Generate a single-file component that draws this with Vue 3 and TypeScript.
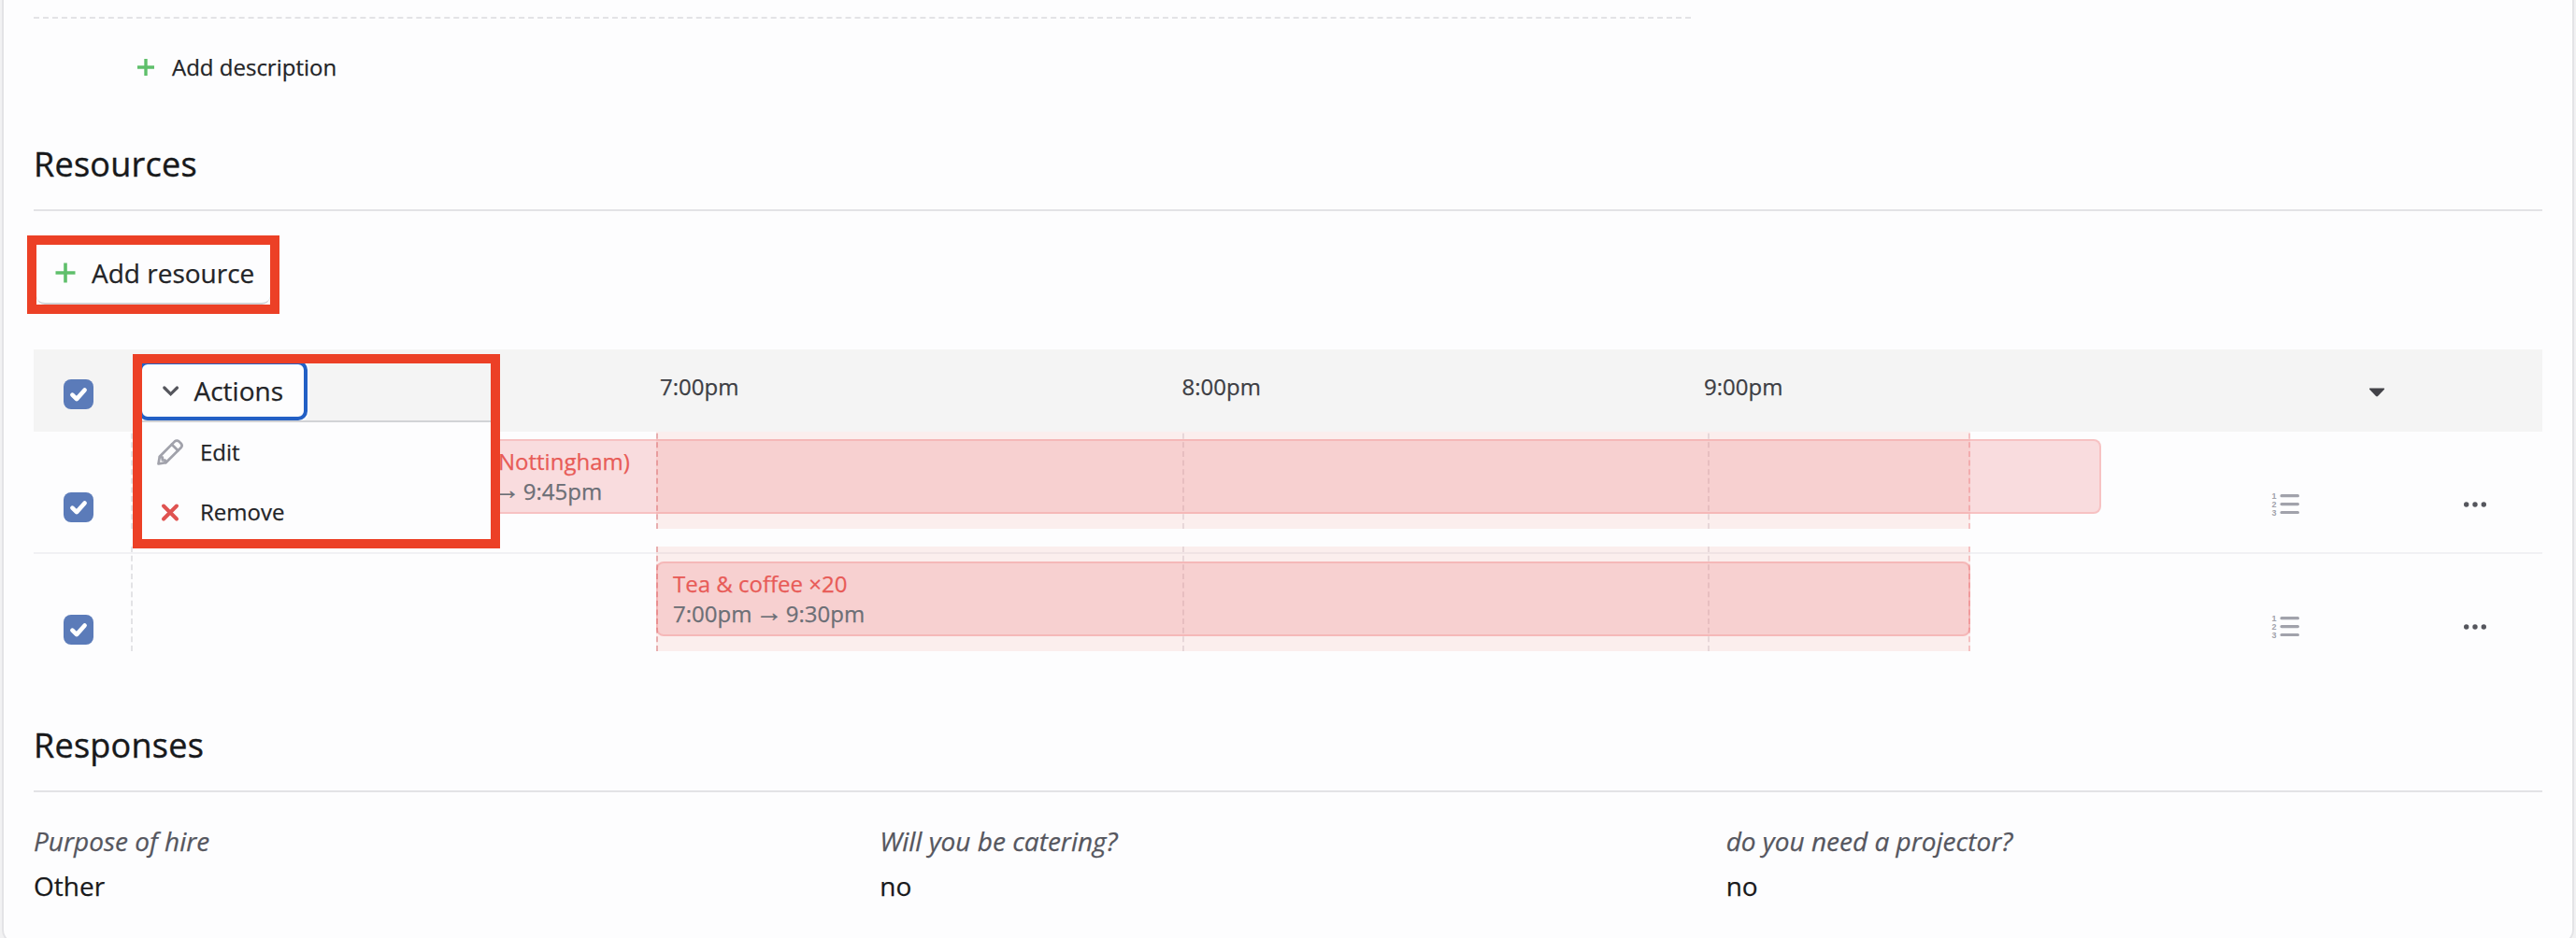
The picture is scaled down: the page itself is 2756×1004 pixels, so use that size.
<script setup lang="ts">
interface Booking {
  title: string
  time: string
  left: number
  width: number
  clipped: boolean
}

const hours = [
  { label: '7:00pm', left: 566 },
  { label: '8:00pm', left: 1124.5 },
  { label: '9:00pm', left: 1683 },
]

const hourLines = [1125, 1687]

const bookings: Booking[] = [
  { title: 'Nottingham)', time: '9:45pm', left: 375, width: 1733, clipped: true },
  { title: 'Tea & coffee ×20', time: '9:30pm', left: 562, width: 1406, clipped: false },
]

const responses = [
  { question: 'Purpose of hire', answer: 'Other' },
  { question: 'Will you be catering?', answer: 'no' },
  { question: 'do you need a projector?', answer: 'no' },
]
</script>

<template>
  <div class="page">
    <main class="card">
      <div class="dashed-rule"></div>
      <div class="add-description">
        <svg width="20" height="20" viewBox="0 0 20 20"><path d="M10 1v18M1 10h18" stroke="#5fbf6b" stroke-width="3.4" /></svg>
        <span>Add description</span>
      </div>

      <h2 class="resources-title">Resources</h2>
      <div class="highlight add-highlight">
        <button class="add-resource">
          <svg width="22" height="22" viewBox="0 0 22 22"><path d="M11 .5v21M.5 11h21" stroke="#5fbf6b" stroke-width="3.6" /></svg>
          <span>Add resource</span>
        </button>
      </div>

      <section class="table">
        <header class="table-head">
          <div class="check-col">
            <span class="checkbox"><svg viewBox="0 0 32 32"><path d="M9.4 16.6l4.6 4.5 8.6-9.6" /></svg></span>
          </div>
          <div class="track">
            <span v-for="h in hours" :key="h.label" class="hour" :style="{ left: h.left + 'px' }">{{ h.label }}</span>
          </div>
          <div class="list-col"></div>
          <div class="caret-col">
            <svg width="18" height="10" viewBox="0 0 18 10"><path d="M1.5 .5h15q1 .6.2 1.6L10 9q-1 .9-2 0L1.3 2.1Q.5 1.1 1.5.5z" fill="#424248" /></svg>
          </div>
          <div class="more-col"></div>
        </header>

        <div v-for="b in bookings" :key="b.title" class="table-row">
          <div class="check-col">
            <span class="checkbox"><svg viewBox="0 0 32 32"><path d="M9.4 16.6l4.6 4.5 8.6-9.6" /></svg></span>
          </div>
          <div class="track timeline">
            <div class="zone"></div>
            <div v-for="x in hourLines" :key="x" class="hour-line" :style="{ left: x + 'px' }"></div>
            <div class="booking" :style="{ left: b.left + 'px', width: b.width + 'px' }">
              <div class="booking-title">{{ b.title }}</div>
              <div class="booking-time" :class="{ clipped: b.clipped }">
                <template v-if="!b.clipped">7:00pm </template><span class="arrow">→</span> {{ b.time }}
              </div>
            </div>
          </div>
          <div class="list-col">
            <svg width="30" height="27" viewBox="0 0 30 27">
              <g fill="#a1a2ab" class="digits">
                <text x="0.6" y="8">1</text>
                <text x="0.6" y="17">2</text>
                <text x="0.6" y="25.8">3</text>
              </g>
              <path d="M11 4.7h17.4M11 13.6h17.4M11 22.5h17.4" stroke="#a1a2ab" stroke-width="3.2" stroke-linecap="round" />
            </svg>
          </div>
          <div class="caret-col"></div>
          <div class="more-col">
            <svg width="26" height="8" viewBox="0 0 26 8" fill="#55565d">
              <circle cx="3.7" cy="4" r="2.7" /><circle cx="13" cy="4" r="2.7" /><circle cx="22.3" cy="4" r="2.7" />
            </svg>
          </div>
        </div>

        <div class="highlight menu-highlight">
          <button class="actions">
            <svg width="20" height="20" viewBox="0 0 20 20"><path d="M2.8 7l6.8 6.8L16.5 7" fill="none" stroke="#55565d" stroke-width="3.2" stroke-linecap="round" /></svg>
            <span>Actions</span>
          </button>
          <div class="menu">
            <div class="menu-item">
              <svg width="28" height="28" viewBox="0 0 28 28" fill="none" stroke="#a1a2ab" stroke-width="2.7" stroke-linejoin="round" stroke-linecap="round">
                <path d="M1.5 26.5l1.3-7.8L18.8 2.6q2.4-2.1 4.8 0l1.900 1.900q2.200 2.400 0 4.800L9.400 25.200z" />
                <path d="M15.8 5.7l6.6 6.6M3 19l2.9.6-.2 2.8 2.9.1.7 2.6" />
              </svg>
              <span class="menu-label">Edit</span>
            </div>
            <div class="menu-item">
              <svg width="28" height="28" viewBox="0 0 28 28"><path d="M7 7.5l14 14M21 7.5l-14 14" stroke="#df5351" stroke-width="4" stroke-linecap="round" /></svg>
              <span class="menu-label">Remove</span>
            </div>
          </div>
        </div>
      </section>

      <h2 class="responses-title">Responses</h2>
      <dl class="responses">
        <div v-for="r in responses" :key="r.question">
          <dt>{{ r.question }}</dt>
          <dd>{{ r.answer }}</dd>
        </div>
      </dl>
    </main>
  </div>
</template>

<style>
body {
  margin: 0;
  overflow: hidden;
}
</style>

<style scoped>
.page {
  height: 1004px;
  overflow: hidden;
  background: #f2f2f3;
  font-family: 'Open Sans', 'Noto Sans', sans-serif;
  font-size: 24px;
  color: #232427;
  -webkit-text-stroke-width: 0.25px;
}
.page * {
  box-sizing: border-box;
}
svg {
  display: block;
  flex: none;
}
.card {
  display: flow-root;
  height: 1011px;
  margin: 0 2px;
  padding: 0 32px;
  border: 2px solid #e3e3e6;
  border-top: 0;
  border-radius: 0 0 16px 16px;
  background: #fdfdfe;
}
.dashed-rule {
  width: 1773px;
  margin-top: 18px;
  border-top: 2px dashed #e3e3e6;
}
.add-description {
  display: flex;
  align-items: center;
  gap: 18px;
  height: 36px;
  margin-top: 34px;
  padding-left: 110px;
  line-height: 36px;
}
h2 {
  height: 76px;
  margin: 60px 0 0;
  border-bottom: 2px solid #e3e3e6;
  color: #18191b;
  font: 400 36px/52px 'Open Sans', 'Noto Sans', sans-serif;
  letter-spacing: 0.25px;
  -webkit-text-stroke-width: 0.4px;
}
h2.responses-title {
  margin-top: 48px;
}
.highlight {
  border: 10px solid #ec4026;
}
.add-highlight {
  width: 270px;
  height: 84px;
  margin: 26px 0 0 -7px;
}
button {
  display: flex;
  align-items: center;
  background: #fdfdfe;
  color: #232427;
  font: 28px/38px 'Open Sans', 'Noto Sans', sans-serif;
}
.add-resource {
  gap: 17px;
  width: 100%;
  height: 64px;
  padding: 0 0 2px 20px;
  border: 0 solid #d2d3d6;
  border-bottom-width: 2px;
  border-radius: 9px;
}
.table {
  position: relative;
  margin-top: 38px;
}
.table-head,
.table-row {
  position: relative;
  display: flex;
}
.table-head {
  z-index: 1;
  height: 88px;
  background: #f4f4f4;
}
.table-row {
  height: 131px;
}
.table-row:nth-child(2) {
  border-bottom: 2px solid #f1f1f4;
}
.check-col {
  width: 104px;
  padding: 32px 0 0 32px;
}
.table-row .check-col {
  padding-top: 65px;
}
.checkbox {
  display: block;
  width: 32px;
  height: 32px;
  border-radius: 8px;
  background: #5b7bb9;
}
.checkbox path {
  fill: none;
  stroke: #fff;
  stroke-width: 4.6;
  stroke-linecap: round;
  stroke-linejoin: round;
}
.track {
  position: relative;
  width: 2245px;
}
.hour {
  position: absolute;
  top: 23px;
  line-height: 34px;
  color: #3d3e44;
}
.timeline {
  height: 112px;
  margin-top: -8px;
  border-left: 2px dashed #e3e3e6;
}
.zone,
.hour-line,
.booking {
  position: absolute;
  margin-left: -2px;
}
.zone {
  top: 0;
  left: 562px;
  width: 1406px;
  height: 112px;
  border-left: 2px dashed rgba(205, 80, 84, 0.4);
  border-right: 2px dashed rgba(228, 90, 94, 0.3);
  background: rgba(228, 84, 72, 0.09);
}
.hour-line {
  top: 0;
  height: 112px;
  border-left: 2px dashed rgba(90, 50, 70, 0.12);
}
.booking {
  top: 16px;
  height: 80px;
  padding: 6px 16px;
  border: 2px solid rgba(240, 90, 90, 0.2);
  border-radius: 8px;
  background: rgba(236, 86, 90, 0.195);
  line-height: 32px;
  white-space: nowrap;
}
.booking-title {
  color: #e85b57;
}
.booking-time {
  color: #6c6f76;
}
.booking-time.clipped {
  margin-left: -3.5px;
}
.arrow {
  display: inline-block;
  width: 24px;
  font-family: 'Liberation Sans', sans-serif;
  text-align: center;
  transform: translateY(-3px) scale(1.22);
}
.list-col {
  width: 120px;
  padding: 64px 0 0 45px;
}
.caret-col {
  width: 75px;
  padding: 41px 0 0 29px;
}
.more-col {
  width: 140px;
  padding: 73.5px 0 0 55px;
}
.digits {
  font: bold 9px 'Liberation Sans', sans-serif;
}
.menu-highlight {
  position: absolute;
  z-index: 2;
  top: 5px;
  left: 106px;
  width: 393px;
  height: 208px;
  overflow: hidden;
}
.actions {
  gap: 14.5px;
  width: 181px;
  height: 64px;
  margin: -3px 0 0 -4px;
  padding: 0 0 0 21px;
  border: 4px solid #2360c5;
  border-radius: 10px;
  box-shadow: 0 0 0 2px #fbfbfc;
}
.menu {
  position: relative;
  height: 127px;
  border-top: 2px solid #d2d3d6;
  background: #fdfdfe;
}
.menu-item {
  display: flex;
  align-items: center;
  gap: 18px;
  height: 64px;
  padding-left: 16px;
}
.menu-label {
  padding-bottom: 2px;
}
.responses {
  display: grid;
  grid-template-columns: repeat(3, 1fr);
  column-gap: 32px;
  margin: 28px 0 0;
  font-size: 28px;
  line-height: 48px;
}
dt {
  color: #55565e;
  font-style: italic;
}
dd {
  margin: 0;
  color: #18191b;
}
</style>
